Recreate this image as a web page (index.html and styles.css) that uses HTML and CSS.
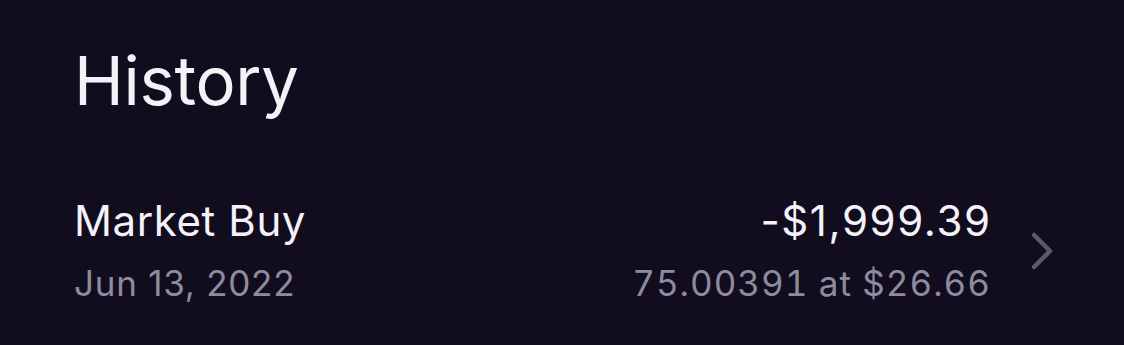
FILE: index.html
```html
<!DOCTYPE html>
<html lang="en">
<head>
  <meta charset="UTF-8" />
  <title>History</title>
  <link rel="stylesheet" href="styles.css">
</head>
<body>
  <section class="history">
    <h1>History</h1>
    <div class="entry">
      <div class="entry-left">
        <div class="entry-title">Market Buy</div>
        <div class="entry-sub">Jun 13, 2022</div>
      </div>
      <div class="entry-right">
        <div class="entry-title amount">-$1,999.39</div>
        <div class="entry-sub">75.00391 at $26.66</div>
      </div>
      <svg class="chevron" width="24" height="40" viewBox="0 0 24 40">
        <path d="M4 4 L20 20 L4 36" fill="none" stroke="#5b576d" stroke-width="4.5" stroke-linecap="round" stroke-linejoin="round"/>
      </svg>
    </div>
  </section>
</body>
</html>
```

FILE: styles.css
```css
* {
  box-sizing: border-box;
  margin: 0;
  padding: 0;
}

body {
  background: #110d1f;
  color: #f4f2f8;
  font-family: 'Inter', sans-serif;
  width: 1124px;
  height: 345px;
  overflow: hidden;
}

.history {
  padding: 41px 0 0 74px;
}

.history h1 {
  font-size: 67px;
  font-weight: 400;
  line-height: 80px;
  letter-spacing: -0.3px;
}

.entry {
  display: flex;
  align-items: center;
  margin-top: 75px;
}

.entry-left {
  flex: 1;
}

.entry-right {
  text-align: right;
}

.entry-title {
  font-size: 42px;
  line-height: 50px;
  letter-spacing: 0.6px;
}

.entry-title.amount {
  letter-spacing: 1.6px;
  margin-right: -1.6px;
}

.entry-sub {
  margin-top: 15px;
  font-size: 35px;
  line-height: 44px;
  letter-spacing: 0.75px;
  color: #8f8b9e;
}

.entry-right .entry-sub {
  font-variant-numeric: tabular-nums;
  letter-spacing: 1px;
  margin-right: -1px;
}

.chevron {
  margin: 0 70px 0 40px;
}
```
